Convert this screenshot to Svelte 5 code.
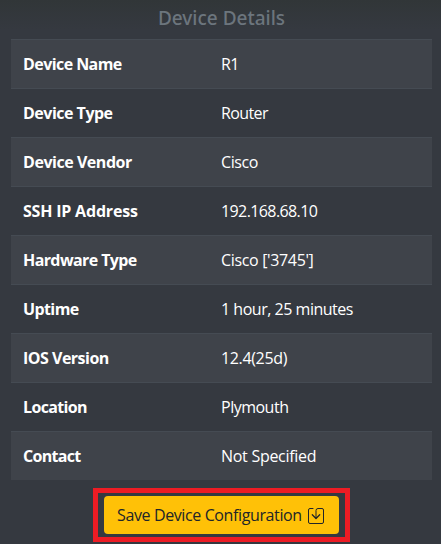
<script>
  // label, value, and the tracking of each in px
  const details = [
    ['Device Name', 'R1', -0.57, -0.7],
    ['Device Type', 'Router', -0.5, -0.6],
    ['Device Vendor', 'Cisco', -0.46, -0.4],
    ['SSH IP Address', '192.168.68.10', -0.2, -0.6],
    ['Hardware Type', "Cisco ['3745']", -0.6, -0.34],
    ['Uptime', '1 hour, 25 minutes', -0.6, -0.48],
    ['IOS Version', '12.4(25d)', -0.5, -0.35],
    ['Location', 'Plymouth', -0.65, -0.5],
    ['Contact', 'Not Specified', -0.7, -0.28]
  ];
</script>

<main>
  <h5>Device Details</h5>
  <div class="table">
    {#each details as [label, value, labelTracking, valueTracking]}
      <div class="row">
        <strong style:letter-spacing="{labelTracking}px">{label}</strong>
        <span style:letter-spacing="{valueTracking}px">{value}</span>
      </div>
    {/each}
  </div>
  <div class="highlight">
    <button>
      <span>Save Device Configuration</span>
      <svg width="16" height="16" viewBox="0 0 16 16" fill="none" stroke="currentColor" stroke-linecap="round" stroke-linejoin="round">
        <path d="M5 .5H2A1.5 1.5 0 0 0 .5 2v12A1.5 1.5 0 0 0 2 15.500h12a1.5 1.5 0 0 0 1.500-1.500V2A1.500 1.500 0 0 0 14 .5h-4Q8 .5 8 2.500v7.800" />
        <path stroke-width="1.300" d="M4.300 6.800L8 10.500l3.700-3.700" />
      </svg>
    </button>
  </div>
</main>

<style>
  :global(body) { margin: 0; background: #343a40; }
  main {
    box-sizing: border-box;
    width: 441px;
    height: 544px;
    overflow: hidden;
    display: flex;
    flex-direction: column;
    background: linear-gradient(#313638 0, #353940 30px, #353940 100%);
    font-family: "Segoe UI", "Open Sans", "Noto Sans", sans-serif;
    color: #fff;
  }
  h5 {
    margin: 0 0 0 2px;
    height: 39px;
    line-height: 36px;
    font-family: "Segoe UI", "Noto Sans", "Open Sans", sans-serif;
    font-size: 19px;
    font-weight: 500;
    text-align: center;
    color: #6c757d;
  }
  .table { margin: 0 9px 0 11px; }
  .row {
    box-sizing: border-box;
    height: 49px;
    padding: 0 12px;
    display: grid;
    grid-template-columns: 198px 1fr;
    line-height: 48px;
    font-size: 16px;
    border-top: 1px solid #454b53;
    white-space: nowrap;
  }
  .row:nth-child(odd) { background: #3f434a; }
  strong { font-weight: 700; }
  .highlight {
    box-sizing: border-box;
    width: 257px;
    height: 54px;
    margin: 8px 0 0 93px;
    border: 5px solid #ed1c24;
    padding: 3px 6px;
  }
  button {
    box-sizing: border-box;
    width: 235px;
    height: 38px;
    padding: 0 15px 0 13px;
    border: 0;
    border-radius: 4px;
    background: #ffc107;
    color: #212529;
    font: 16px "Segoe UI", "Open Sans", "Noto Sans", sans-serif;
    display: flex;
    align-items: center;
    justify-content: space-between;
    white-space: nowrap;
  }
  button span { letter-spacing: -0.38px; }
  svg { flex: none; position: relative; top: 1px; }
</style>
